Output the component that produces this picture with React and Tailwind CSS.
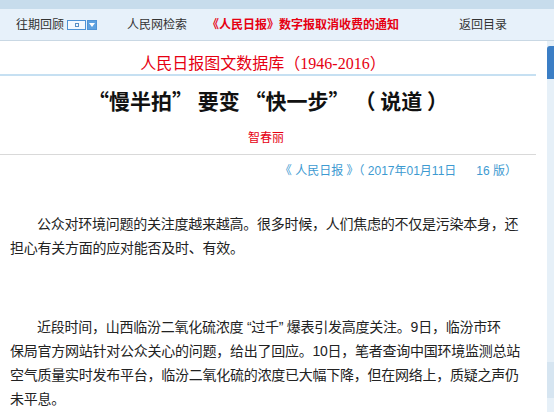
import React from 'react';

const DatePicker = () => (
    <div className="ml-[3px] flex items-center gap-[1px]">
        <div className="w-[19px] h-[10px] border border-[#4f93d6] bg-[#f4f9ff] flex items-center justify-center">
            <div className="w-[4px] h-[4px] border border-[#5a8fc4]" />
        </div>
        <div className="w-[10px] h-[10px] bg-[#5fa2e0] border border-[#4f93d6] flex items-center justify-center">
            <svg width="6" height="4" viewBox="0 0 6 4"><path d="M0 0h6L3 4z" fill="#fff" /></svg>
        </div>
    </div>
);

const App = () => {
    return (
        <div className="w-[554px] h-[412px] overflow-hidden bg-white flex flex-col font-['Liberation_Sans','Noto_Sans_CJK_SC',sans-serif]">
            {/* top band + nav */}
            <div className="h-[9px] bg-[#c7dcec]" />
            <div className="h-[32px] bg-[#e7f1fa] border-b border-[#c9d8e4] flex items-center text-[12px] text-[#333]">
                <span className="ml-[16px]">往期回顾</span>
                <DatePicker />
                <span className="ml-[30px]">人民网检索</span>
                <span className="ml-[20px] font-bold text-[#e60012]">《人民日报》数字报取消收费的通知</span>
                <span className="ml-[60px]">返回目录</span>
            </div>

            <div className="flex-1 flex min-h-0">
                <div className="w-[536px]">
                    {/* header */}
                    <div className="pt-[13px] text-center text-[16px] leading-[20px] text-[#e60012] font-['Liberation_Serif','Noto_Sans_CJK_SC',serif] pr-[10px]">
                        人民日报图文数据库（1946-2016）
                    </div>
                    <div className="h-[2px] bg-[#c6e0f2]" />
                    <h1 className="mt-[10px] text-center text-[21px] leading-[28px] font-bold text-[#111] font-['Noto_Sans_CJK_SC',sans-serif] whitespace-pre">
                        “慢半拍” 要变 “快一步” （ 说道 ）
                    </h1>
                    <div className="mt-[16px] text-center text-[12px] leading-[16px] text-[#e60012] pr-[4px]">智春丽</div>
                    <div className="mt-[8px] h-px bg-[#d9d9d9]" />
                    <div className="mt-[8px] flex justify-end pr-[19px] text-[12px] leading-[16px] text-[#3d9ad1] whitespace-pre">
                        《 人民日报 》（ 2017年01月11日      16 版）
                    </div>

                    {/* article */}
                    <div className="pl-[10px] text-[14px] leading-[24px] text-[#222] tracking-[-0.25px]">
                        <p className="mt-[33px] indent-[27px]">
                            公众对环境问题的关注度越来越高。很多时候，人们焦虑的不仅是污染本身，还<br />
                            担心有关方面的应对能否及时、有效。
                        </p>
                        <p className="mt-[55px] indent-[27px]">
                            近段时间，山西临汾二氧化硫浓度 “过千” 爆表引发高度关注。9日，临汾市环<br />
                            保局官方网站针对公众关心的问题，给出了回应。10日，笔者查询中国环境监测总站<br />
                            空气质量实时发布平台，临汾二氧化硫的浓度已大幅下降，但在网络上，质疑之声仍<br />
                            未平息。
                        </p>
                    </div>
                </div>

                {/* scrollbar */}
                <div className="ml-auto w-[7px] bg-[#e6f0f8] pt-[5px] flex flex-col">
                    <div className="h-[33px] bg-[#3b7ec5] rounded-tl-[3px]" />
                    <div className="mt-[283px] h-[36px] bg-[#d6e5f1]" />
                </div>
            </div>
        </div>
    );
};

export default App;
